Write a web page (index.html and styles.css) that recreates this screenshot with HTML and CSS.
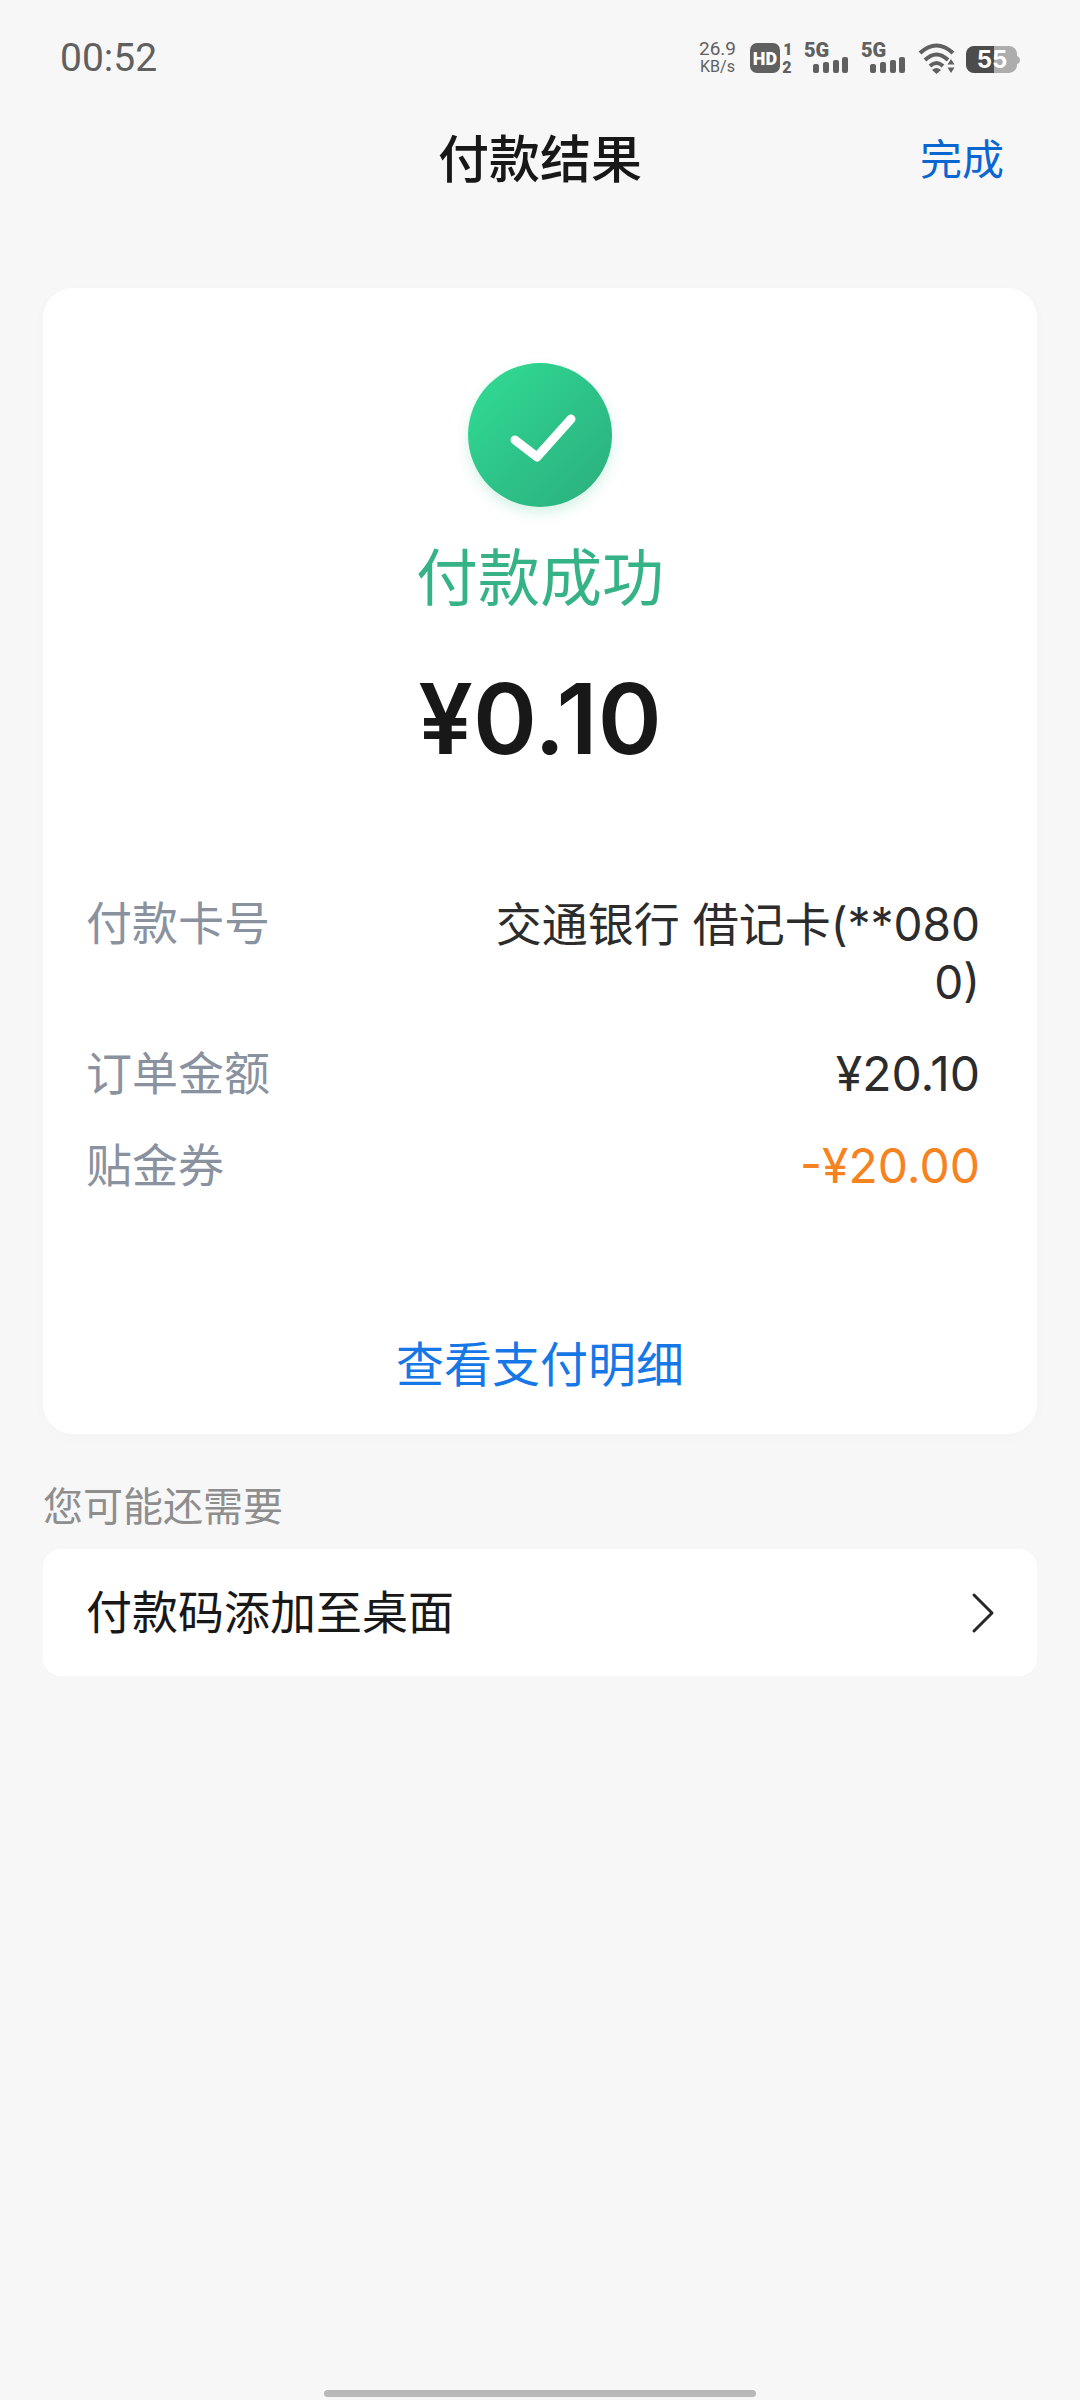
FILE: index.html
```html
<!DOCTYPE html>
<html lang="zh-CN">
<head>
<meta charset="utf-8">
<meta name="viewport" content="width=device-width, initial-scale=1">
<title>付款结果</title>
<link rel="stylesheet" href="styles.css">
</head>
<body>
<div class="page">
  <div class="status-bar">
    <span class="clock">00:52</span>
    <div class="status-icons">
      <div class="net-speed"><span>26.9</span><span class="unit">KB/s</span></div>
      <svg class="hd" width="44" height="32" viewBox="0 0 44 32">
        <rect x="0" y="1" width="30" height="30" rx="7" fill="#606060"/>
        <text class="hd-text" x="15" y="23" text-anchor="middle">HD</text>
        <text class="sim-text" x="38" y="13" text-anchor="middle">1</text>
        <text class="sim-text" x="37" y="31" text-anchor="middle">2</text>
      </svg>
      <svg class="signal" width="46" height="32" viewBox="0 0 46 32">
        <text class="net-text" x="0" y="15">5G</text>
        <g fill="#606060"><rect x="9" y="22" width="6" height="9" rx="2"/><rect x="19" y="20" width="6" height="11" rx="2"/><rect x="29" y="18" width="6" height="13" rx="2"/><rect x="38" y="15" width="6" height="16" rx="2"/></g>
      </svg>
      <svg class="signal" width="46" height="32" viewBox="0 0 46 32">
        <text class="net-text" x="0" y="15">5G</text>
        <g fill="#606060"><rect x="9" y="22" width="6" height="9" rx="2"/><rect x="19" y="20" width="6" height="11" rx="2"/><rect x="29" y="18" width="6" height="13" rx="2"/><rect x="38" y="15" width="6" height="16" rx="2"/></g>
      </svg>
      <svg class="wifi" width="38" height="32" viewBox="0 0 38 32">
        <g fill="none" stroke="#606060" stroke-width="4">
          <path d="M2 11Q18.500-4 35 11"/>
          <path d="M7 18Q18.500 7 30 18"/>
          <path d="M12 24Q18.500 18 25 24"/>
        </g>
        <path d="M14 28Q18.500 24 23 28L18.500 32Z" fill="#606060"/>
        <path d="M33 17l3.500 5.500h-7zM33 31l3.500-5.500h-7z" fill="#606060"/>
      </svg>
      <svg class="battery" width="54" height="32" viewBox="0 0 54 32">
        <path d="M28 4h15a8 8 0 0 1 8 8v2q3 1 3 4t-3 4a8 8 0 0 1-8 9H28z" fill="#adadad"/>
        <path d="M28 4H8a8 8 0 0 0-8 8v11a8 8 0 0 0 8 8h20z" fill="#4c4c4c"/>
        <text class="battery-text" x="26" y="26" text-anchor="middle">55</text>
      </svg>
    </div>
  </div>

  <header class="nav">
    <h1 class="nav-title">付款结果</h1>
    <button class="nav-done" type="button">完成</button>
  </header>

  <main class="content">
    <section class="card result">
      <svg class="result-icon" width="144" height="144" viewBox="0 0 144 144">
        <defs><linearGradient id="green" x1="0.15" y1="0.15" x2="0.85" y2="0.85"><stop offset="0" stop-color="#30d690"/><stop offset="0.5" stop-color="#2dc389"/><stop offset="1" stop-color="#2cb581"/></linearGradient></defs>
        <circle cx="72" cy="72" r="72" fill="url(#green)"/>
        <path d="M47 77L69 94L103 56" fill="none" stroke="#fff" stroke-width="9" stroke-linecap="round" stroke-linejoin="round"/>
      </svg>
      <p class="result-text">付款成功</p>
      <p class="amount">¥0.10</p>
      <dl class="details">
        <dt>付款卡号</dt><dd>交通银行 借记卡(**0800)</dd>
        <dt>订单金额</dt><dd class="money">¥20.10</dd>
        <dt>贴金券</dt><dd class="money discount">-¥20.00</dd>
      </dl>
      <a class="detail-link" href="#">查看支付明细</a>
    </section>

    <h2 class="more-title">您可能还需要</h2>
    <a class="card shortcut" href="#">
      <span>付款码添加至桌面</span>
      <svg width="22" height="40" viewBox="0 0 22 40"><path d="M2 2L20 20L2 38" fill="none" stroke="#262626" stroke-width="3" stroke-linecap="round" stroke-linejoin="round"/></svg>
    </a>
  </main>
  <div class="home-indicator"></div>
</div>
</body>
</html>
```
FILE: styles.css
```css
* { box-sizing: border-box; }
body {
  margin: 0;
  background: #f7f7f7;
  color: #181818;
  font-family: Roboto, "Noto Sans CJK SC", sans-serif;
}
h1, h2, p, dl, dd { margin: 0; }
a { text-decoration: none; }
svg { display: block; flex: none; overflow: visible; }
.page {
  display: flex;
  flex-direction: column;
  min-height: 100vh;
}

.status-bar {
  display: flex;
  align-items: center;
  justify-content: space-between;
  height: 116px;
  padding: 0 60px;
  color: #606060;
}
.clock { font-size: 39px; line-height: 48px; }
.status-icons { display: flex; align-items: center; }
.net-speed {
  display: flex;
  flex-direction: column;
  align-items: center;
  margin-right: 14px;
  font-size: 19px;
  line-height: 18px;
}
.net-speed .unit { font-size: 16px; }
.hd { margin-right: 10px; }
.signal { margin-right: 11px; }
.wifi { margin-right: 10px; }
.hd-text, .sim-text, .net-text, .battery-text { font-weight: 900; fill: #606060; }
.hd-text { font-size: 18px; fill: #fff; }
.sim-text { font-size: 16px; }
.net-text { font-size: 20px; }
.battery-text { font-family: Inter, sans-serif; font-size: 24px; font-weight: 700; fill: #fff; }

.nav {
  display: grid;
  grid-template-columns: 1fr auto 1fr;
  align-items: center;
  height: 90px;
  padding: 0 76px;
}
.nav-title {
  grid-column: 2;
  font-size: 51px;
  font-weight: 500;
  line-height: 72px;
}
.nav-done {
  justify-self: end;
  padding: 0;
  border: 0;
  background: none;
  color: #0a66d0;
  font: inherit;
  font-size: 42px;
  line-height: 60px;
}

.content { padding: 82px 43px 0; }
.card { background: #fff; }
.result {
  display: flex;
  flex-direction: column;
  align-items: center;
  padding: 75px 43px 38px;
  border-radius: 30px;
  box-shadow: 0 4px 20px rgba(0, 0, 0, 0.015);
}
.result-icon {
  border-radius: 50%;
  box-shadow: 0 6px 14px rgba(44, 190, 130, 0.2);
}
.result-text {
  margin-top: 33px;
  color: #35b286;
  font-size: 62px;
  line-height: 80px;
}
.amount {
  margin-top: 49px;
  font-family: Inter, sans-serif;
  font-size: 97px;
  font-weight: 600;
  line-height: 100px;
}
.details {
  display: grid;
  grid-template-columns: auto 488px;
  justify-content: space-between;
  row-gap: 34px;
  width: 100%;
  margin-top: 126px;
  padding-right: 14px;
  font-size: 46px;
  line-height: 58px;
}
.details dt { color: #8a929f; }
.details dd {
  color: #2c2c2c;
  font-family: Inter, "Noto Sans CJK SC", sans-serif;
  text-align: right;
  word-break: break-all;
}
.details .money { font-size: 48px; }
.details .discount { color: #f5831f; }
.detail-link {
  margin-top: 141px;
  color: #1677e6;
  font-size: 48px;
  line-height: 60px;
}

.more-title {
  margin-top: 49px;
  color: #8e8e8e;
  font-size: 40px;
  font-weight: 400;
  line-height: 50px;
}
.shortcut {
  display: flex;
  align-items: center;
  justify-content: space-between;
  margin-top: 16px;
  padding: 35px 43px 34px;
  border-radius: 18px;
  color: #181818;
  font-size: 46px;
  line-height: 58px;
}
.home-indicator {
  width: 40%;
  height: 7px;
  margin: auto auto 3px;
  border-radius: 4px;
  background: #b9b9b9;
}
```
